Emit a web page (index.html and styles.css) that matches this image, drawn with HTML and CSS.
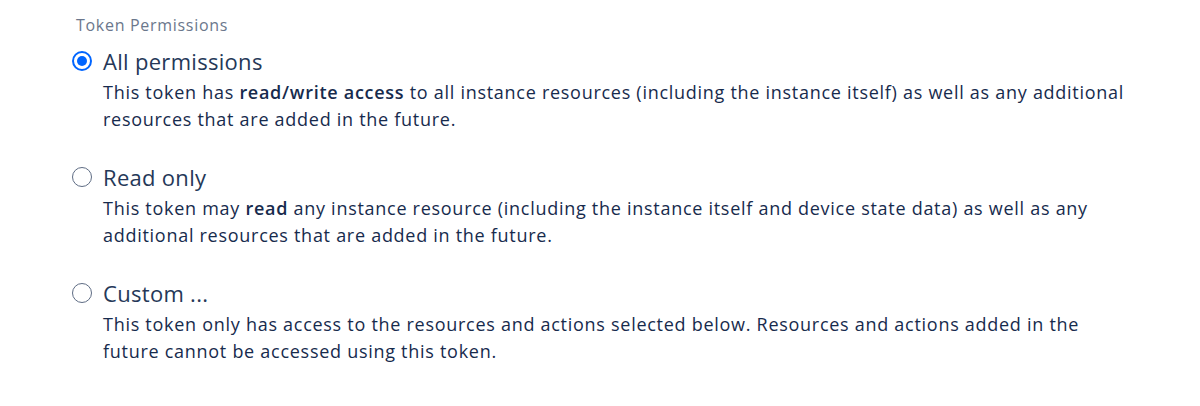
FILE: index.html
```html
<!DOCTYPE html>
<html lang="en">
<head>
  <meta charset="UTF-8" />
  <meta name="viewport" content="width=device-width, initial-scale=1.0"/>
  <title>Token Permissions</title>
  <link rel="stylesheet" href="styles.css">
</head>
<body>

<section class="permissions">
  <div class="permissions-label">Token Permissions</div>

  <label class="option">
    <input type="radio" name="perm" value="all" checked>
    <span class="radio"></span>
    <span class="option-body">
      <span class="option-title">All permissions</span>
      <span class="option-desc">This token has <b>read/write access</b> to all instance resources (including the instance itself) as well as any additional resources that are added in the future.</span>
    </span>
  </label>

  <label class="option">
    <input type="radio" name="perm" value="read">
    <span class="radio"></span>
    <span class="option-body">
      <span class="option-title">Read only</span>
      <span class="option-desc">This token may <b>read</b> any instance resource (including the instance itself and device state data) as well as any additional resources that are added in the future.</span>
    </span>
  </label>

  <label class="option">
    <input type="radio" name="perm" value="custom">
    <span class="radio"></span>
    <span class="option-body">
      <span class="option-title">Custom ...</span>
      <span class="option-desc">This token only has access to the resources and actions selected below. Resources and actions added in the future cannot be accessed using this token.</span>
    </span>
  </label>
</section>

</body>
</html>
```

FILE: styles.css
```css
body {
  margin: 0;
  background: #fff;
  color: #172b4d;
  font-family: 'Open Sans', 'Noto Sans', sans-serif;
}

.permissions {
  padding: 14px 72px;
  display: flex;
  flex-direction: column;
  gap: 30px;
}

.permissions-label {
  font-size: 16px;
  line-height: 22px;
  letter-spacing: 0.7px;
  color: #6b778c;
  padding-left: 4px;
  margin-bottom: -19px;
}

.option {
  display: flex;
  gap: 11px;
  cursor: pointer;
}

.option input {
  display: none;
}

.radio {
  flex-shrink: 0;
  width: 20px;
  height: 20px;
  margin-top: 4px;
  box-sizing: border-box;
  border: 1.5px solid #5e6c84;
  border-radius: 50%;
  position: relative;
}

.option input:checked + .radio {
  border: 2px solid #0065ff;
}

.option input:checked + .radio::after {
  content: '';
  position: absolute;
  top: 3px;
  left: 3px;
  width: 10px;
  height: 10px;
  border-radius: 50%;
  background: #0065ff;
}

.option-body {
  display: flex;
  flex-direction: column;
  gap: 4px;
  max-width: 1024px;
}

.option-title {
  font-size: 22px;
  line-height: 28px;
  letter-spacing: 0.3px;
  color: #253858;
}

.option-desc {
  font-size: 18px;
  line-height: 27px;
  letter-spacing: 0.72px;
  color: #172b4d;
}

.option-desc b {
  font-weight: 600;
}
```
